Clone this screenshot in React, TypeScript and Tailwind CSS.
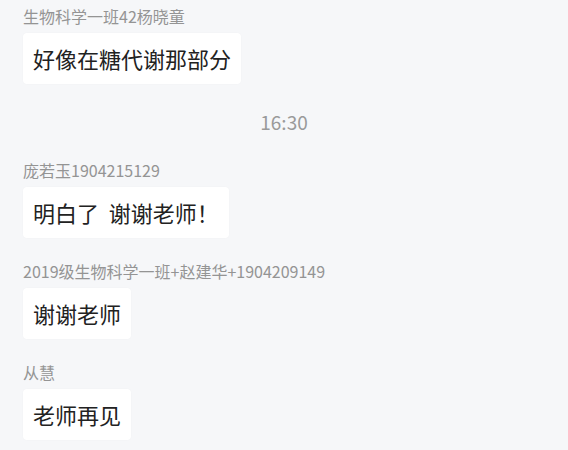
import React from 'react';

interface Message {
    name: string;
    text: string;
}

const font = { fontFamily: '"Noto Sans CJK SC", "Noto Sans", sans-serif' };

function Bubble({ name, text }: Message) {
    return (
        <div className="flex flex-col items-start">
            <div className="text-[16px] leading-[22px] text-[#949494]">{name}</div>
            <div className="mt-[6px] bg-white rounded-[4px] px-[10px] py-[10px] text-[22px] leading-[31px] text-[#222222] whitespace-pre shadow-[0_0_2px_rgba(0,0,0,0.03)]">
                {text}
            </div>
        </div>
    );
}

export default function App() {
    return (
        <div className="w-[568px] h-[450px] bg-[#f6f7f9] overflow-hidden px-[23px] pt-[5px]" style={font}>
            <Bubble name="生物科学一班42杨晓童" text="好像在糖代谢那部分" />
            <div className="mt-[26px] mb-[25px] text-center text-[19px] leading-[24px] text-[#9a9a9a]">16:30</div>
            <div className="flex flex-col gap-[22px]">
                <Bubble name="庞若玉1904215129" text="明白了  谢谢老师！" />
                <Bubble name="2019级生物科学一班+赵建华+1904209149" text="谢谢老师" />
                <Bubble name="从慧" text="老师再见" />
            </div>
        </div>
    );
}
